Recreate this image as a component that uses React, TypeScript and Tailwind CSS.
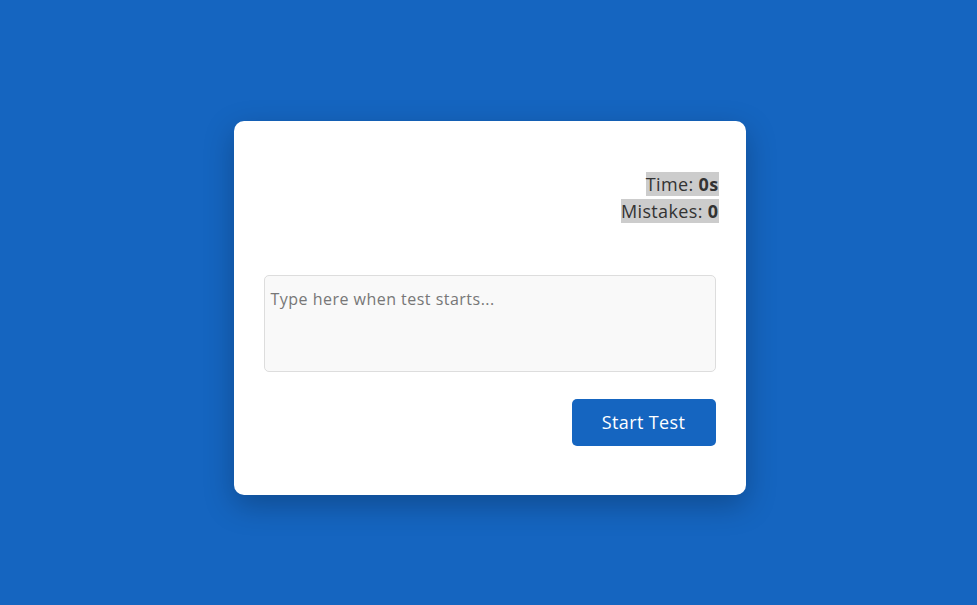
import React, { useState } from 'react';

const App = () => {
  const [text, setText] = useState('');
  const [time] = useState(0);
  const [mistakes] = useState(0);

  return (
    <div
      className="min-h-screen w-full bg-[#1565c0] flex items-center justify-center pt-[10px] pl-[2px]"
      style={{ fontFamily: '"Open Sans", "Liberation Sans", sans-serif' }}
    >
      <div className="w-[512px] h-[374px] bg-white rounded-[10px] shadow-[0_10px_30px_rgba(0,0,0,0.25)] px-[30px] pt-[50px] flex flex-col">
        <div className="flex flex-col items-end text-[18px] leading-[27px] tracking-[0.02em] text-[#333] -mr-[3px]">
          <p>
            <span className="bg-[#cccccc]">Time: </span>
            <span className="bg-[#cccccc] font-bold">{time}s</span>
          </p>
          <p>
            <span className="bg-[#cccccc]">Mistakes: </span>
            <span className="bg-[#cccccc] font-bold">{mistakes}</span>
          </p>
        </div>
        <textarea
          value={text}
          onChange={(e) => setText(e.target.value)}
          placeholder="Type here when test starts..."
          className="mt-[50px] w-full h-[97px] resize-none bg-[#f9f9f9] border border-[#dddddd] rounded-[5px] px-[6px] py-[12px] text-[16px] leading-[22px] tracking-[0.03em] text-[#333] placeholder:text-[#777] outline-none"
        />
        <div className="flex justify-end mt-[27px]">
          <button className="w-[144px] h-[47px] bg-[#1565c0] text-white text-[18px] tracking-[0.02em] rounded-[5px]">
            Start Test
          </button>
        </div>
      </div>
    </div>
  );
};

export default App;
